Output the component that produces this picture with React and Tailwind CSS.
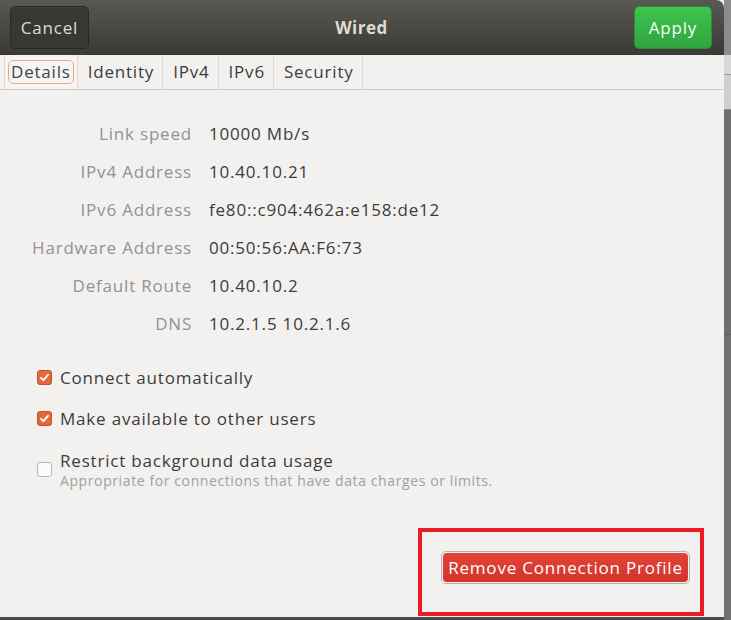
import React from "react";

const font = { fontFamily: '"Open Sans", "Noto Sans", sans-serif' };

function Check({ checked }) {
  if (checked) {
    return (
      <div className="w-[15px] h-[15px] rounded-[3px] bg-[#e2693c] border border-[#c4512a] flex items-center justify-center shrink-0">
        <svg width="11" height="11" viewBox="0 0 11 11">
          <path d="M2 5.8 L4.4 8.2 L9 2.8" fill="none" stroke="white" strokeWidth="1.9" strokeLinecap="round" strokeLinejoin="round" />
        </svg>
      </div>
    );
  }
  return <div className="w-[15px] h-[15px] rounded-[3px] bg-[#fbfbfb] border border-[#b9b6b1] shrink-0" />;
}

const rows = [
  ["Link speed", "10000 Mb/s"],
  ["IPv4 Address", "10.40.10.21"],
  ["IPv6 Address", "fe80::c904:462a:e158:de12"],
  ["Hardware Address", "00:50:56:AA:F6:73"],
  ["Default Route", "10.40.10.2"],
  ["DNS", "10.2.1.5 10.2.1.6"],
];

const tabs = ["Details", "Identity", "IPv4", "IPv6", "Security"];

export default function App() {
  return (
    <div className="w-[731px] h-[620px] flex bg-[#6f6f6f] overflow-hidden tracking-[0.8px]" style={font}>
      <div className="w-[724px] h-[620px] flex flex-col shrink-0">
        <div className="w-[724px] h-[617px] flex flex-col bg-[#f2f1f0] shadow-[0_1px_3px_rgba(0,0,0,0.5)]">
          {/* Title bar */}
          <div className="h-[55px] flex items-center justify-between pl-[10px] pr-[12px] rounded-tr-[8px] bg-gradient-to-b from-[#5a5852] to-[#3b3935] shrink-0">
            <div className="w-[79px] h-[43px] rounded-[5px] bg-[#393733] border border-[#2a2926] shadow-[inset_0_1px_0_rgba(255,255,255,0.06)] flex items-center justify-center text-[17px] text-[#dcdcd8]">
              Cancel
            </div>
            <div className="text-[17px] font-bold text-[#dfdbd2] tracking-[0.5px]">Wired</div>
            <div className="w-[78px] h-[43px] rounded-[5px] bg-gradient-to-b from-[#40c450] to-[#2fa53e] border border-[#2b8c35] flex items-center justify-center text-[17px] text-[#f4fff4]">
              Apply
            </div>
          </div>
          {/* Tabs */}
          <div className="h-[35px] flex items-stretch gap-[2px] pl-[4px] border-b border-[#cfcbc6] bg-[#f2f1f0] shrink-0">
            {tabs.map((t, i) => (
              <div
                key={t}
                className={
                  "flex items-center border-r border-[#dcd9d4] text-[17px] text-[#3c3c3c] " +
                  (i === 0 ? "bg-[#f6f5f4] border-l px-[3px]" : "bg-[#f2f1f0] px-[8px]")
                }
              >
                {i === 0 ? (
                  <span className="px-[2px] h-[24px] flex items-center rounded-[5px] border-[1.5px] border-[#f2a88c] text-[#3d4450]">
                    {t}
                  </span>
                ) : (
                  t
                )}
              </div>
            ))}
          </div>
          {/* Content */}
          <div className="flex-1 flex flex-col">
            <div className="pt-[25px] grid grid-cols-[192px_auto] gap-x-[17px] justify-start">
              {rows.map(([l, v]) => (
                <React.Fragment key={l}>
                  <div className="h-[38px] flex items-center justify-end text-[17px] text-[#929292]">{l}</div>
                  <div className="h-[38px] flex items-center text-[17px] text-[#3c3c3c]">{v}</div>
                </React.Fragment>
              ))}
            </div>
            <div className="pl-[37px] pt-[14px] flex flex-col">
              <div className="h-[41px] flex items-center gap-[8px]">
                <Check checked />
                <span className="text-[17px] text-[#3c3c3c]">Connect automatically</span>
              </div>
              <div className="h-[41px] flex items-center gap-[8px]">
                <Check checked />
                <span className="text-[17px] text-[#3c3c3c]">Make available to other users</span>
              </div>
              <div className="flex items-center gap-[8px] mt-[11px]">
                <Check />
                <div className="flex flex-col">
                  <span className="text-[17px] leading-[22px] text-[#3c3c3c]">Restrict background data usage</span>
                  <span className="text-[14px] leading-[17px] text-[#a0a0a0] tracking-[0.6px]">
                    Appropriate for connections that have data charges or limits.
                  </span>
                </div>
              </div>
            </div>
            <div className="flex-1" />
            <div className="flex justify-end pr-[20px] pb-[1px]">
              <div className="w-[286px] h-[88px] border-4 border-[#ed1c24] pl-[19px] pt-[19px]">
                <div className="w-[249px] h-[33px] rounded-[5px] border border-[#b5b2ae] p-[1px]">
                  <div className="w-full h-full rounded-[4px] bg-gradient-to-b from-[#e3443a] to-[#d2342a] flex items-center justify-center text-[17px] text-white">
                    Remove Connection Profile
                  </div>
                </div>
              </div>
            </div>
          </div>
        </div>
        <div className="flex-1 bg-[#4a4a4a]" />
      </div>
      <div className="flex-1 flex flex-col">
        <div className="h-[55px] bg-[#8c8c8c]" />
        <div className="h-[20px] bg-[#d8d8d8] border-b border-[#9a9a9a]" />
        <div className="h-[35px] bg-[#cfcfcf] border-b border-[#8a8a8a]" />
        <div className="h-[225px] bg-[#6e6e6e] border-b border-[#5a5a5a]" />
        <div className="flex-1 bg-[#707070]" />
      </div>
    </div>
  );
}
